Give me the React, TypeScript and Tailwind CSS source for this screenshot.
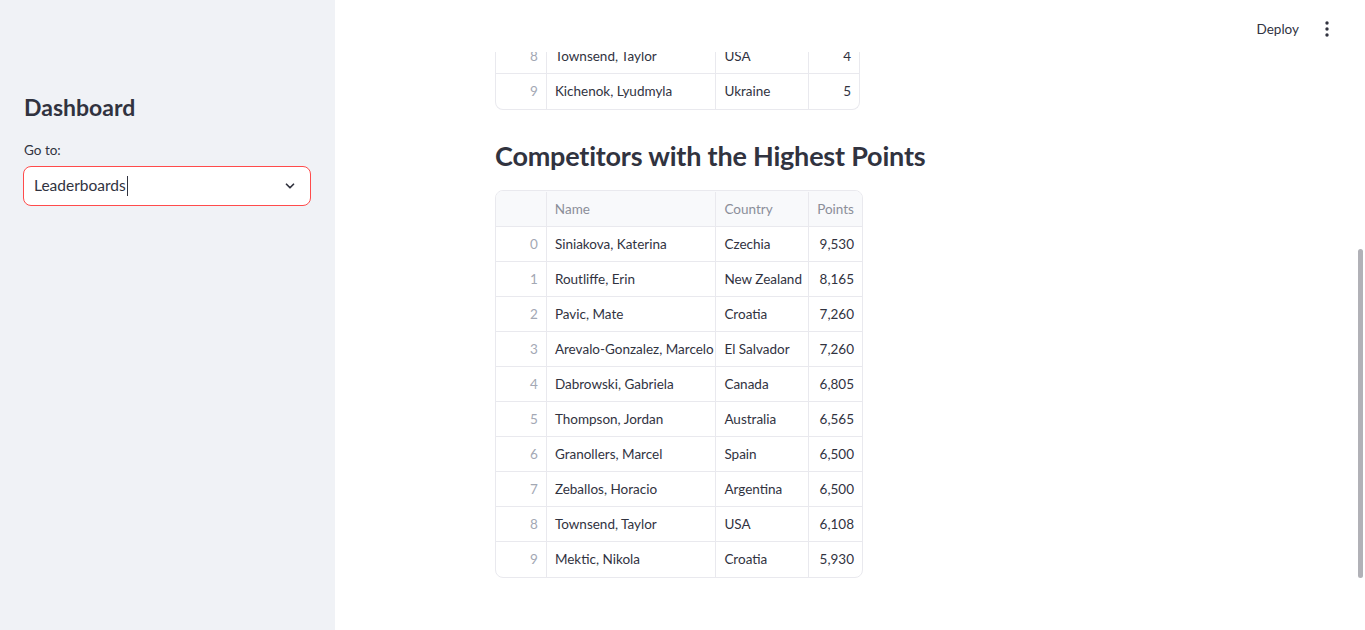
import React from "react";

const top = [
  { i: 8, name: "Townsend, Taylor", country: "USA", pts: "4" },
  { i: 9, name: "Kichenok, Lyudmyla", country: "Ukraine", pts: "5" },
];

const rows = [
  { i: 0, name: "Siniakova, Katerina", country: "Czechia", pts: "9,530" },
  { i: 1, name: "Routliffe, Erin", country: "New Zealand", pts: "8,165" },
  { i: 2, name: "Pavic, Mate", country: "Croatia", pts: "7,260" },
  { i: 3, name: "Arevalo-Gonzalez, Marcelo", country: "El Salvador", pts: "7,260" },
  { i: 4, name: "Dabrowski, Gabriela", country: "Canada", pts: "6,805" },
  { i: 5, name: "Thompson, Jordan", country: "Australia", pts: "6,565" },
  { i: 6, name: "Granollers, Marcel", country: "Spain", pts: "6,500" },
  { i: 7, name: "Zeballos, Horacio", country: "Argentina", pts: "6,500" },
  { i: 8, name: "Townsend, Taylor", country: "USA", pts: "6,108" },
  { i: 9, name: "Mektic, Nikola", country: "Croatia", pts: "5,930" },
];

function Row({ r, last, pw }: { r: { i: number; name: string; country: string; pts: string }; last: boolean; pw: string }) {
  return (
    <div className={`flex h-[35px] items-center whitespace-nowrap ${last ? "" : "border-b border-[#e9e9ee]"}`}>
      <div className="w-[51px] h-full flex items-center justify-end pr-[8px] text-[#a3a8b4] border-r border-[#e9e9ee]">{r.i}</div>
      <div className="w-[170px] h-full flex items-center pl-[8px] border-r border-[#e9e9ee] overflow-hidden">{r.name}</div>
      <div className="w-[93px] h-full flex items-center pl-[8px] border-r border-[#e9e9ee] overflow-hidden">{r.country}</div>
      <div className={`${pw} h-full flex items-center justify-end pr-[8px]`}>{r.pts}</div>
    </div>
  );
}

export default function App() {
  return (
    <div className="flex h-[630px] w-[1365px] overflow-hidden text-[#31333f]" style={{ fontFamily: "Lato, 'Noto Sans', sans-serif" }}>
      <aside className="w-[335px] shrink-0 bg-[#f0f2f6] px-[23px] pt-[92px]">
        <h1 className="text-[23px] font-bold leading-[30px] pl-[1px]">Dashboard</h1>
        <div className="mt-[18px] text-[13.5px] leading-[20px] pl-[1px]">Go to:</div>
        <div className="mt-[6px] h-[40px] w-[288px] rounded-[8px] border border-[#ff4b4b] bg-white flex items-center pl-[10px] pr-[13px]">
          <span className="text-[15.5px]">Leaderboards</span>
          <span className="ml-[1px] inline-block w-[1px] h-[20px] bg-[#31333f]" />
          <svg className="ml-auto" width="14" height="14" viewBox="0 0 24 24" fill="none" stroke="#31333f" strokeWidth="3" strokeLinecap="round" strokeLinejoin="round">
            <path d="M6 9l6 6 6-6" />
          </svg>
        </div>
      </aside>
      <main className="relative flex-1 bg-white">
        <div className="absolute left-0 right-0 top-0 h-[52px] bg-white flex items-start justify-end pt-[19px] pr-[36px] z-10">
          <span className="text-[13.5px] leading-[20px] mr-[26px]">Deploy</span>
          <svg width="4" height="16" viewBox="0 0 4 16" className="mt-[2px]" fill="#31333f">
            <circle cx="2" cy="2" r="1.7" />
            <circle cx="2" cy="8" r="1.7" />
            <circle cx="2" cy="14" r="1.7" />
          </svg>
        </div>
        <div className="absolute right-[2px] top-[249px] w-[5px] h-[329px] rounded-full bg-[#b1b1b7]" />
        <div className="pl-[160px] pt-[39px] text-[13.5px]">
          <div className="w-[365px] rounded-b-[8px] border-x border-b border-[#e9e9ee]">
            {top.map((r, k) => (
              <Row key={k} r={r} last={k === top.length - 1} pw="w-[50px]" />
            ))}
          </div>
          <h2 className="mt-[28px] text-[27px] font-bold leading-[36px] tracking-[-0.2px]">Competitors with the Highest Points</h2>
          <div className="mt-[16px] w-[368px] rounded-[8px] border border-[#e9e9ee] overflow-hidden">
            <div className="flex h-[36px] items-center bg-[#f8f9fb] border-b border-[#e9e9ee] text-[#8b8e99] pt-[1px]">
              <div className="w-[51px] h-full border-r border-[#e9e9ee]" />
              <div className="w-[170px] h-full flex items-center pl-[8px] border-r border-[#e9e9ee]">Name</div>
              <div className="w-[93px] h-full flex items-center pl-[8px] border-r border-[#e9e9ee]">Country</div>
              <div className="w-[53px] h-full flex items-center pl-[8px]">Points</div>
            </div>
            {rows.map((r, k) => (
              <Row key={k} r={r} last={k === rows.length - 1} pw="w-[53px]" />
            ))}
          </div>
        </div>
      </main>
    </div>
  );
}
